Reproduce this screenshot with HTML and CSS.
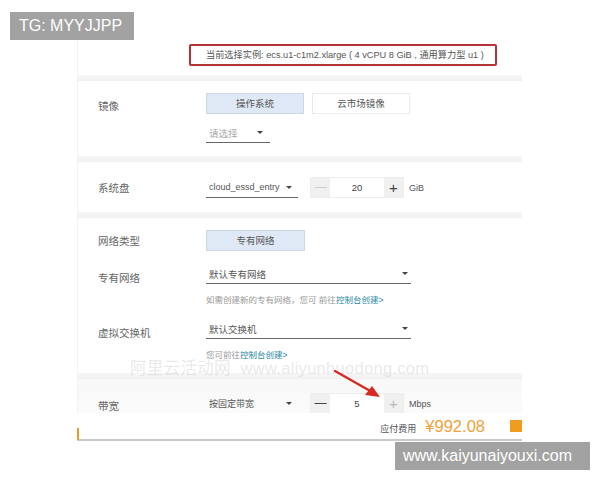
FILE: index.html
```html
<!DOCTYPE html>
<html lang="zh">
<head>
<meta charset="utf-8">
<link rel="stylesheet" href="styles.css">
</head>
<body>
<div class="page">
  <div class="panel">
    <section class="sec sec-top">
      <div class="current">当前选择实例: ecs.u1-c1m2.xlarge ( 4 vCPU 8 GiB , 通用算力型 u1 )</div>
    </section>
    <div class="gap"></div>
    <section class="sec sec-image">
      <div class="row">
        <div class="label lab-img">镜像</div>
        <div class="ctrl">
          <div class="tabs">
            <span class="tab active">操作系统</span>
            <span class="tab">云市场镜像</span>
          </div>
          <div class="select sel-short placeholder"><span>请选择</span><i class="caret"></i></div>
        </div>
      </div>
    </section>
    <div class="gap"></div>
    <section class="sec sec-disk">
      <div class="row center">
        <div class="label">系统盘</div>
        <div class="ctrl inline">
          <div class="select sel-mid"><span>cloud_essd_entry</span><i class="caret"></i></div>
          <div class="stepper">
            <span class="st-btn minus-light">—</span>
            <span class="st-val">20</span>
            <span class="st-btn plus-dark">+</span>
          </div>
          <span class="unit">GiB</span>
        </div>
      </div>
    </section>
    <div class="gap"></div>
    <section class="sec sec-net">
      <div class="row center r1">
        <div class="label">网络类型</div>
        <div class="ctrl"><span class="tab active wide">专有网络</span></div>
      </div>
      <div class="row r2">
        <div class="label lab-low">专有网络</div>
        <div class="ctrl">
          <div class="select sel-long"><span>默认专有网络</span><i class="caret"></i></div>
          <div class="hint">如需创建新的专有网络，您可 前往<a class="link">控制台创建&gt;</a></div>
        </div>
      </div>
      <div class="row r3">
        <div class="label lab-low">虚拟交换机</div>
        <div class="ctrl">
          <div class="select sel-long"><span>默认交换机</span><i class="caret"></i></div>
          <div class="hint">您可前往<a class="link">控制台创建&gt;</a></div>
        </div>
      </div>
    </section>
    <div class="gap"></div>
    <section class="sec sec-bw">
      <div class="row center">
        <div class="label lab-bw">带宽</div>
        <div class="ctrl inline">
          <div class="select sel-mid noline"><span>按固定带宽</span><i class="caret"></i></div>
          <div class="stepper">
            <span class="st-btn minus-dark">—</span>
            <span class="st-val">5</span>
            <span class="st-btn plus-light">+</span>
          </div>
          <span class="unit">Mbps</span>
        </div>
      </div>
    </section>
    <footer class="foot">
      <span class="foot-left"></span>
      <span class="due">应付费用</span>
      <span class="price">¥992.08</span>
      <span class="buy"></span>
    </footer>
  </div>

  <div class="wm-site">阿里云活动网&nbsp;&nbsp;www.aliyunhuodong.com</div>
  <svg class="arrow" width="60" height="40" viewBox="0 0 60 40">
    <line x1="3" y1="3" x2="40" y2="24" stroke="#d62b23" stroke-width="2.4" stroke-linecap="round"/>
    <polygon points="48,29 33,27 40,18" fill="#d62b23"/>
  </svg>
  <div class="tag tag-tg">TG: MYYJJPP</div>
  <div class="tag tag-site">www.kaiyunaiyouxi.com</div>
</div>
</body>
</html>
```
FILE: styles.css
```css
* { box-sizing: border-box; }
html, body { margin: 0; padding: 0; background: #fff; }
body {
  font-family: "Liberation Sans", "Noto Sans CJK SC", sans-serif;
  color: #555;
  width: 600px;
  height: 480px;
  overflow: hidden;
}
.page { position: relative; width: 600px; height: 480px; padding-top: 40px; }
.panel {
  margin-left: 77px;
  width: 445px;
  display: flex;
  flex-direction: column;
}
.sec { background: #fff; border-left: 1px solid #f3f3f3; }
.gap {
  height: 6px;
  background: linear-gradient(#f6f6f6, #f1f1f1);
}
.sec-top { height: 35px; padding: 4px 0 0 111px; }
.current {
  width: 308px;
  height: 22px;
  border: 2px solid #b2343a;
  border-radius: 2px;
  font-size: 9.2px;
  line-height: 18px;
  padding-left: 15px;
  color: #555;
  white-space: nowrap;
  overflow: hidden;
  box-shadow: 0 0 1px rgba(160,40,40,0.4);
}
.sec-image { height: 75px; padding-top: 12px; }
.sec-disk { height: 50px; padding-top: 15px; }
.sec-net { height: 155px; padding-top: 12px; }
.sec-bw { height: 34px; padding-top: 14px; background: linear-gradient(#f8f8f8, #fbfbfb); }
.row { display: flex; align-items: flex-start; }
.row.center { align-items: center; }
.label {
  width: 128px;
  padding-left: 20px;
  font-size: 10.5px;
  color: #666;
  flex: none;
}
.lab-img { padding-top: 5px; }
.ctrl { display: flex; flex-direction: column; }
.ctrl.inline { flex-direction: row; align-items: center; }
.tabs { display: flex; gap: 8px; }
.tab {
  width: 98px;
  height: 21px;
  line-height: 19px;
  text-align: center;
  font-size: 9.5px;
  border: 1px solid #ebebeb;
  color: #555;
  background: #fff;
}
.tab.active { background: #dfe9f5; border-color: #cbd8e6; }
.tab.wide { width: 99px; display: block; }
.select {
  display: flex;
  align-items: center;
  justify-content: space-between;
  height: 20px;
  border-bottom: 1.5px solid #666;
  font-size: 9.5px;
  color: #555;
  padding: 0 3px 0 3px;
}
.placeholder { color: #aaa; }
.sel-short { width: 64px; margin-top: 9px; padding-right: 7px; }
.sel-mid { width: 92px; padding-right: 6px; font-size: 9px; }
.sel-mid.noline { border-bottom-color: transparent; }
.sel-long { width: 205px; }
.caret {
  width: 0; height: 0;
  border-left: 3px solid transparent;
  border-right: 3px solid transparent;
  border-top: 3.5px solid #444;
}
.stepper {
  display: flex;
  margin-left: 12px;
  height: 21px;
  border: 1px solid #ededed;
}
.st-btn {
  width: 19px;
  text-align: center;
  background: #f0f0f0;
  line-height: 19px;
  font-size: 12px;
}
.minus-light { color: #ccc; }
.plus-light { color: #bbb; }
.minus-dark, .plus-dark { color: #444; }
.plus-dark { font-size: 15px; }
.plus-light { font-size: 15px; }
.st-val {
  width: 54px;
  text-align: center;
  font-size: 9.5px;
  line-height: 19px;
  color: #444;
  background: #fff;
}
.unit { margin-left: 5px; font-size: 9px; color: #555; }
.r2 { margin-top: 13px; }
.r3 { margin-top: 14px; }
.lab-low { padding-top: 6px; }
.hint { font-size: 8.5px; color: #999; margin-top: 9px; }
.link { color: #2a8aa8; }
.lab-bw { padding-top: 4px; }
.foot {
  position: relative;
  height: 28px;
  background: #fff;
  border-bottom: 2px solid #c9c9c9;
  display: flex;
  align-items: center;
  justify-content: flex-end;
}
.foot-left {
  position: absolute;
  left: 0; top: 15px;
  width: 2px; height: 12px;
  background: #e89a2c;
}
.due { font-size: 9px; color: #555; margin-right: 9px; margin-top: 4px; }
.price { font-size: 16.5px; color: #eea23a; margin-right: 25px; }
.buy { width: 12px; height: 12px; background: #f09c1e; }
.wm-site {
  position: absolute;
  left: 130px; top: 355px;
  font-size: 16.5px;
  color: rgba(200,200,200,0.4);
  letter-spacing: 0.3px;
  white-space: nowrap;
}
.arrow { position: absolute; left: 332px; top: 368px; }
.tag {
  position: absolute;
  background: #a2a2a2;
  color: #fff;
  font-size: 16px;
  line-height: 28px;
  height: 28px;
}
.tag-tg { left: 10px; top: 12px; width: 124px; padding-left: 9px; }
.tag-site { left: 395px; top: 442px; width: 195px; padding-left: 8px; }
```
